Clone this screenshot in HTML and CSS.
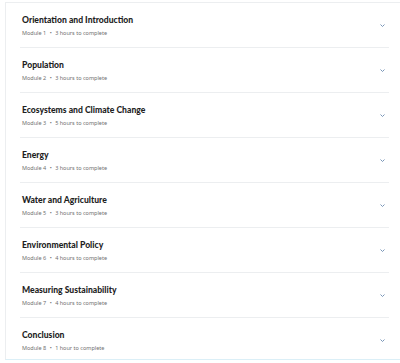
FILE: index.html
```html
<!DOCTYPE html>
<html lang="en">
<head>
    <meta charset="UTF-8">
    <meta name="viewport" content="width=device-width, initial-scale=1.0">
    <title>Course Modules</title>
    <link rel="stylesheet" href="styles.css">
</head>
<body>
    <div class="modules">
        <div class="module">
            <div class="module-text">
                <h3>Orientation and Introduction</h3>
                <p>Module 1 <span class="dot">•</span> 3 hours to complete</p>
            </div>
            <svg class="chevron" viewBox="0 0 10 6"><path d="M1 1l4 4 4-4"/></svg>
        </div>
        <div class="module">
            <div class="module-text">
                <h3>Population</h3>
                <p>Module 2 <span class="dot">•</span> 3 hours to complete</p>
            </div>
            <svg class="chevron" viewBox="0 0 10 6"><path d="M1 1l4 4 4-4"/></svg>
        </div>
        <div class="module">
            <div class="module-text">
                <h3>Ecosystems and Climate Change</h3>
                <p>Module 3 <span class="dot">•</span> 5 hours to complete</p>
            </div>
            <svg class="chevron" viewBox="0 0 10 6"><path d="M1 1l4 4 4-4"/></svg>
        </div>
        <div class="module">
            <div class="module-text">
                <h3>Energy</h3>
                <p>Module 4 <span class="dot">•</span> 3 hours to complete</p>
            </div>
            <svg class="chevron" viewBox="0 0 10 6"><path d="M1 1l4 4 4-4"/></svg>
        </div>
        <div class="module">
            <div class="module-text">
                <h3>Water and Agriculture</h3>
                <p>Module 5 <span class="dot">•</span> 3 hours to complete</p>
            </div>
            <svg class="chevron" viewBox="0 0 10 6"><path d="M1 1l4 4 4-4"/></svg>
        </div>
        <div class="module">
            <div class="module-text">
                <h3>Environmental Policy</h3>
                <p>Module 6 <span class="dot">•</span> 4 hours to complete</p>
            </div>
            <svg class="chevron" viewBox="0 0 10 6"><path d="M1 1l4 4 4-4"/></svg>
        </div>
        <div class="module">
            <div class="module-text">
                <h3>Measuring Sustainability</h3>
                <p>Module 7 <span class="dot">•</span> 4 hours to complete</p>
            </div>
            <svg class="chevron" viewBox="0 0 10 6"><path d="M1 1l4 4 4-4"/></svg>
        </div>
        <div class="module last">
            <div class="module-text">
                <h3>Conclusion</h3>
                <p>Module 8 <span class="dot">•</span> 1 hour to complete</p>
            </div>
            <svg class="chevron" viewBox="0 0 10 6"><path d="M1 1l4 4 4-4"/></svg>
        </div>
    </div>
</body>
</html>
```

FILE: styles.css
```css
body {
    margin: 0;
    padding: 2px 0 0 5px;
    background: #fff;
    font-family: "Noto Sans", Arial, sans-serif;
}
.modules {
    border-top: 1px solid #eceef0;
    border-left: 1px solid #eceef0;
    border-bottom: 1px solid #dbeff7;
    height: 358px;
    box-sizing: border-box;
}
.module {
    display: flex;
    align-items: center;
    justify-content: space-between;
    height: 45px;
    box-sizing: border-box;
    margin: 0 11px 0 14px;
    padding: 0 4px 0 2px;
    border-bottom: 1px solid #eceef0;
}
.module.last {
    border-bottom: none;
}
.module h3 {
    margin: 0;
    font-family: Lato, "Noto Sans", sans-serif;
    font-size: 8.6px;
    line-height: 12px;
    font-weight: 900;
    color: #1f1f1f;
}
.module p {
    margin: 3px 0 0;
    font-size: 5.5px;
    line-height: 8px;
    color: #6f6f6f;
}
.dot {
    margin: 0 2px;
}
.chevron {
    width: 5px;
    height: 3px;
    fill: none;
    stroke: #6b8bb0;
    stroke-width: 1.8;
}
```
